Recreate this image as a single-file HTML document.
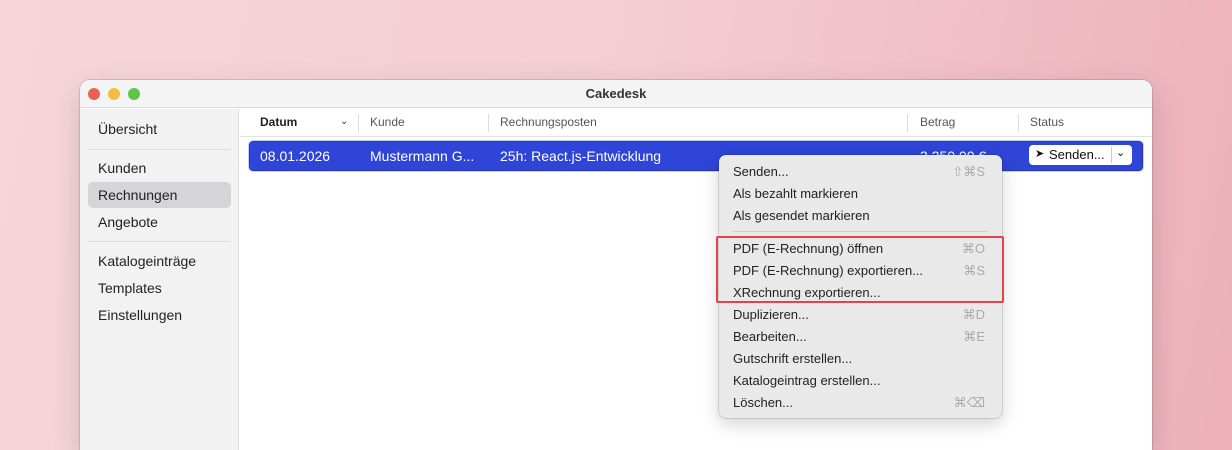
<!DOCTYPE html>
<html><head><meta charset="utf-8"><style>
*{margin:0;padding:0;box-sizing:border-box}
html,body{width:1232px;height:450px;overflow:hidden}
body{position:relative;font-family:"Liberation Sans","DejaVu Sans",sans-serif;background:linear-gradient(100deg,#f6d6da 0%,#f3cdd3 50%,#eeb0ba 100%)}
.win{position:absolute;left:80px;top:80px;width:1072px;height:370px;border-radius:10px 10px 0 0;background:#fff;overflow:hidden;box-shadow:0 0 0 1px rgba(0,0,0,.12),0 10px 30px rgba(0,0,0,.15)}
.title{position:absolute;left:0;top:0;width:100%;height:28px;background:#f5f4f4;border-bottom:1px solid #dcdcdc;text-align:center;font-weight:bold;font-size:13px;line-height:28px;color:#333}
.dot{position:absolute;top:8px;width:12px;height:12px;border-radius:50%}
.side{position:absolute;left:0;top:29px;width:159px;height:341px;background:#f2f2f2;border-right:1px solid #dedede}
.si{position:absolute;left:18px;font-size:14px;color:#222}
.sep{position:absolute;left:8px;width:143px;height:1px;background:#dcdcdc}
.hd{position:absolute;top:29px;left:160px;right:0;height:28px;border-bottom:1px solid #e2e2e2;font-size:12px;color:#555}
.hd span{position:absolute;top:6px}
.hd i{position:absolute;top:5px;width:1px;height:18px;background:#ddd}
.row{position:absolute;left:169px;top:61px;width:894px;height:30px;background:#2e45d8;border:1.5px solid #2a3aa8;border-radius:4px;outline:1px solid #c9cff2;color:#fff;font-size:14px}
.row span{position:absolute;top:6px}
.menu{position:absolute;left:719px;top:155px;width:283px;height:263px;background:#e9e9e9;border-radius:7px;box-shadow:0 0 0 1px rgba(0,0,0,.12),0 6px 18px rgba(0,0,0,.18);font-size:13px;color:#222}
.mi{position:absolute;left:14px}
.sc{position:absolute;right:17px;color:#aaa;font-size:13px}
</style></head><body>
<div class="win">
<div class="title">Cakedesk</div>
<div class="dot" style="left:8px;background:#ec5f57"></div>
<div class="dot" style="left:28px;background:#f4bd41"></div>
<div class="dot" style="left:48px;background:#5ec545"></div>
<div class="side">
<div class="si" style="top:12px">Übersicht</div>
<div class="sep" style="top:40px"></div>
<div style="position:absolute;left:8px;top:73px;width:143px;height:26px;background:#d5d5d7;border-radius:5px"></div>
<div class="si" style="top:51px">Kunden</div>
<div class="si" style="top:78px">Rechnungen</div>
<div class="si" style="top:105px">Angebote</div>
<div class="sep" style="top:132px"></div>
<div class="si" style="top:144px">Katalogeinträge</div>
<div class="si" style="top:171px">Templates</div>
<div class="si" style="top:198px">Einstellungen</div>
</div>
<div class="hd">
<span style="left:20px;color:#222;font-weight:bold">Datum</span><span style="left:100px;font-size:10px;top:7px;color:#333">&#8964;</span>
<i style="left:118px"></i><span style="left:130px">Kunde</span>
<i style="left:248px"></i><span style="left:260px">Rechnungsposten</span>
<i style="left:667px"></i><span style="left:680px">Betrag</span>
<i style="left:778px"></i><span style="left:790px">Status</span>
</div>
<div class="row">
<span style="left:10px">08.01.2026</span>
<span style="left:120px">Mustermann G...</span>
<span style="left:250px">25h: React.js-Entwicklung</span>
<span style="left:670px">3.250,00 €</span>
<div style="position:absolute;left:779px;top:3px;width:103px;height:20px;background:#fff;border-radius:4px;color:#111;font-size:13px">
<span style="left:6px;top:2px;font-size:11px">&#10148;</span><span style="left:20px;top:2px">Senden...</span>
<div style="position:absolute;left:82px;top:2px;width:1px;height:16px;background:#ccc"></div>
<span style="left:87px;top:1px;font-size:11px">&#8964;</span></div>
</div>
</div>
<div class="menu">
<div class="mi" style="top:9px">Senden...</div><div class="sc" style="top:9px">⇧⌘S</div>
<div class="mi" style="top:31px">Als bezahlt markieren</div>
<div class="mi" style="top:53px">Als gesendet markieren</div>
<div style="position:absolute;left:14px;right:14px;top:76px;height:1px;background:#d0d0d0"></div>
<div class="mi" style="top:86px">PDF (E-Rechnung) öffnen</div><div class="sc" style="top:86px">⌘O</div>
<div class="mi" style="top:108px">PDF (E-Rechnung) exportieren...</div><div class="sc" style="top:108px">⌘S</div>
<div class="mi" style="top:130px">XRechnung exportieren...</div>
<div class="mi" style="top:152px">Duplizieren...</div><div class="sc" style="top:152px">⌘D</div>
<div class="mi" style="top:174px">Bearbeiten...</div><div class="sc" style="top:174px">⌘E</div>
<div class="mi" style="top:196px">Gutschrift erstellen...</div>
<div class="mi" style="top:218px">Katalogeintrag erstellen...</div>
<div class="mi" style="top:240px">Löschen...</div><div class="sc" style="top:240px">⌘⌫</div>
</div>
<div style="position:absolute;left:716px;top:236px;width:288px;height:67px;border:2.5px solid #e0444c;border-radius:2px"></div>
</body></html>
